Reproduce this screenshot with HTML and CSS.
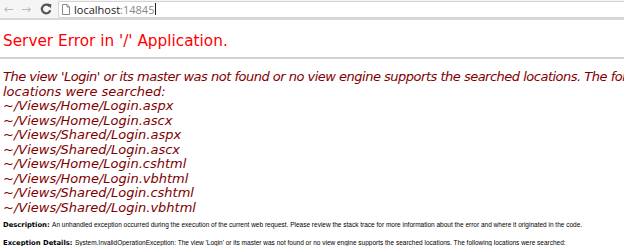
FILE: index.html
```html
<!DOCTYPE html>
<html lang="en">
<head>
  <meta charset="UTF-8">
  <title>Server Error</title>
  <link rel="stylesheet" href="styles.css">
</head>
<body>

<div class="toolbar">
  <div class="nav-buttons">
    <span class="nav-btn">&#8592;</span>
    <span class="nav-btn">&#8594;</span>
    <svg class="reload" width="12" height="12" viewBox="0 0 12 12">
      <path d="M9.6 3.4A4.3 4.3 0 1 0 10.3 7.2" fill="none" stroke="#555" stroke-width="2.2"/>
      <path d="M7.2 0.6L11.4 1.2L10.8 5.4Z" fill="#555"/>
    </svg>
  </div>
  <div class="omnibox">
    <svg class="page-icon" width="8" height="11" viewBox="0 0 8 11">
      <path d="M0.5 0.5H5L7.5 3V10.5H0.5Z" fill="#fff" stroke="#888"/>
      <path d="M5 0.5V3H7.5" fill="none" stroke="#888"/>
    </svg>
    <span class="host">localhost</span><span class="port">:14845</span><span class="caret"></span>
  </div>
</div>

<div class="page">
  <h1>Server Error in '/' Application.</h1>
  <hr>
  <h2><span class="lead">The view 'Login' or its master was not found or no view engine supports the searched locations. The following</span><br>
  locations were searched:<br>
  ~/Views/Home/Login.aspx<br>
  ~/Views/Home/Login.ascx<br>
  ~/Views/Shared/Login.aspx<br>
  ~/Views/Shared/Login.ascx<br>
  ~/Views/Home/Login.cshtml<br>
  ~/Views/Home/Login.vbhtml<br>
  ~/Views/Shared/Login.cshtml<br>
  ~/Views/Shared/Login.vbhtml</h2>

  <p class="detail"><b>Description: </b>An unhandled exception occurred during the execution of the current web request. Please review the stack trace for more information about the error and where it originated in the code.</p>
  <p class="detail"><b>Exception Details: </b>System.InvalidOperationException: The view 'Login' or its master was not found or no view engine supports the searched locations. The following locations were searched:</p>
</div>

</body>
</html>
```

FILE: styles.css
```css
html, body {
  margin: 0;
  padding: 0;
  background: #fff;
  overflow: hidden;
}
.toolbar {
  display: flex;
  align-items: center;
  height: 18px;
  background: #f5f5f5;
  border-bottom: 2px solid #d8d8d8;
  padding-left: 4px;
}
.nav-buttons {
  display: flex;
  align-items: center;
  width: 54px;
}
.nav-btn {
  font-family: "DejaVu Sans", sans-serif;
  font-size: 12px;
  color: #bbb;
  width: 17px;
}
.reload {
  margin-left: 2px;
}
.omnibox {
  flex: 1;
  display: flex;
  align-items: center;
  height: 15px;
  background: #fff;
  border: 1px solid #d4d4d4;
  border-right: none;
  border-radius: 2px 0 0 2px;
  padding-left: 3px;
  font-family: "Open Sans", "DejaVu Sans", sans-serif;
  font-size: 11px;
}
.page-icon {
  margin-right: 4px;
}
.host {
  color: #222;
}
.port {
  color: #888;
}
.caret {
  display: inline-block;
  width: 1px;
  height: 12px;
  background: #222;
  margin-left: 1px;
}
.page {
  padding: 0 3px;
  white-space: nowrap;
}
h1 {
  font-family: "DejaVu Sans", Verdana, sans-serif;
  font-weight: normal;
  font-size: 15.3px;
  color: #f00;
  margin: 12px 0 0;
  line-height: 18px;
}
hr {
  border: none;
  height: 2px;
  background: #d2d2d2;
  margin: 7px -3px 0;
}
h2 {
  font-family: "DejaVu Sans", Verdana, sans-serif;
  font-weight: normal;
  font-style: italic;
  font-size: 13px;
  color: #800000;
  line-height: 14.5px;
  margin: 11px 0 0;
}
h2 .lead {
  letter-spacing: -0.5px;
}
.detail {
  font-family: "Liberation Sans", Arial, sans-serif;
  font-size: 6.5px;
  color: #000;
  margin: 5px 0 0;
  line-height: 9px;
}
.detail + .detail {
  margin-top: 8px;
}
.detail b {
  font-family: "DejaVu Sans", Verdana, sans-serif;
  font-size: 6.8px;
}
```
